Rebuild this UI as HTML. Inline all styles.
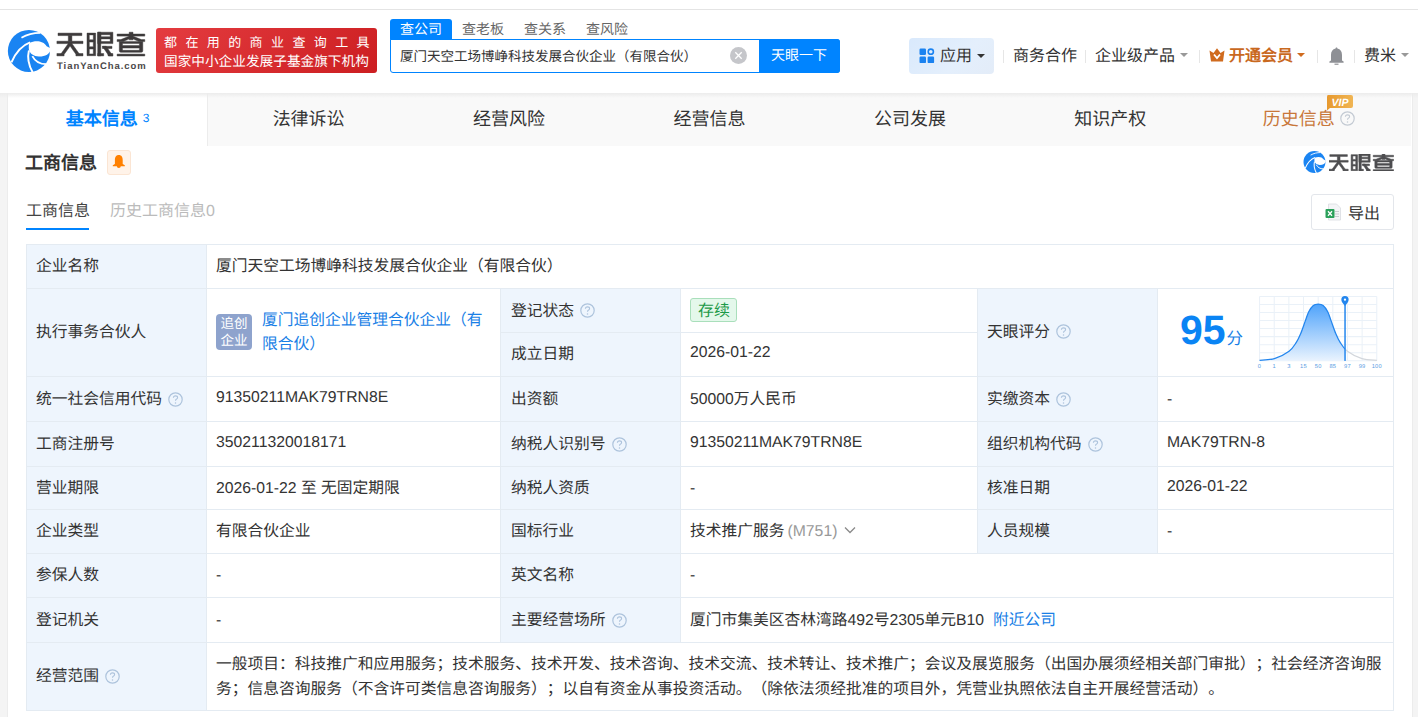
<!DOCTYPE html>
<html lang="zh-CN">
<head>
<meta charset="utf-8">
<style>
*{box-sizing:border-box;margin:0;padding:0}
html,body{width:1418px;height:717px;overflow:hidden}
body{background:#f4f4f4;font-family:"Liberation Sans",sans-serif;color:#333;position:relative;text-rendering:geometricPrecision}
.abs{position:absolute;white-space:nowrap}
#top{position:absolute;left:0;top:0;width:1418px;height:93px;background:#fff;border-top:0}
#topline{position:absolute;left:0;top:9px;width:1418px;height:1px;background:#e4e4e4}
#shadow{position:absolute;left:0;top:93px;width:1418px;height:5px;background:linear-gradient(#ececec,rgba(255,255,255,0));z-index:5}
#card{position:absolute;left:7px;top:93px;width:1406px;height:624px;background:#fff;border-left:1px solid #ececec;border-right:1px solid #ececec}
#tabs{position:absolute;left:8px;top:93px;width:1403px;height:53px;background:#f9f9f9}
.tab{position:absolute;top:0;height:53px;width:200.43px;text-align:center;font-size:18px;line-height:53px;color:#333}
.tab.act{background:#fff;border-right:1px solid #ececec;color:#0084ff;font-weight:bold}
</style>
</head>
<body>
<div id="top"></div>
<div id="topline"></div>

<svg class="abs" style="left:5px;top:26px" width="50" height="50" viewBox="0 0 717 717"><circle cx="343" cy="358" r="302" fill="#1a84f2"/>
<path d="M350 242 C425 205 545 200 597 290 L660 322 C645 405 575 440 485 438 C412 435 360 400 344 345 C338 300 340 265 350 242 Z" fill="#fff"/>
<path d="M92 522 C150 390 240 280 360 236" stroke="#fff" stroke-width="28" fill="none"/>
<path d="M236 168 C320 118 420 98 505 98" stroke="#fff" stroke-width="24" fill="none"/>
<path d="M343 350 C318 450 338 560 398 668" stroke="#fff" stroke-width="28" fill="none"/>
<path d="M392 432 C430 505 495 548 592 548" stroke="#fff" stroke-width="26" fill="none"/></svg>
<svg class="abs" style="left:54px;top:28px" width="95" height="32" viewBox="54 28 95 32"><g fill="#3d3a3b" stroke="#3d3a3b" stroke-width="0.45" stroke-linejoin="round"><rect x="58.0" y="33.1" width="23.9" height="2.5"/><rect x="56.9" y="41.2" width="26.1" height="2.4"/><rect x="68.3" y="35.5" width="3.6" height="5.8"/><polygon points="68.3,43.5 71.9,43.5 64.6,53.8 61.0,53.8"/><rect x="56.9" y="53.5" width="7.2" height="2.4"/><polygon points="68.3,43.5 71.9,43.5 79.2,53.8 75.6,53.8"/><rect x="75.9" y="53.5" width="7.1" height="2.4"/><path fill-rule="evenodd" d="M87 33.1 H95.7 V55.7 H87 Z M89.3 34.9 H93.3 V39.8 H89.3 Z M89.3 42.1 H93.3 V46.75 H89.3 Z M89.3 49 H93.3 V53.9 H89.3 Z"/><rect x="97.7" y="32.2" width="3.1" height="23.7"/><rect x="97.7" y="53.5" width="6.0" height="2.4"/><path fill-rule="evenodd" d="M97.7 32.2 H112.9 V43.6 H97.7 Z M100.8 34.7 H110.2 V36.7 H100.8 Z M100.8 38.9 H110.2 V41.5 H100.8 Z"/><rect x="102.4" y="46.3" width="9.6" height="2.2"/><polygon points="102.4,46.3 106.2,46.3 112.9,55.9 108.9,55.9"/><rect x="108.0" y="53.5" width="4.9" height="2.4"/><rect x="117.1" y="34" width="27.7" height="2.1"/><rect x="129.2" y="32.2" width="3.8" height="7.6"/><polygon points="129.6,36 131.8,37.8 123.2,41.6 117.1,41.6 117.1,39.6 120.8,39.6"/><polygon points="132.6,36 130.4,37.8 139.0,41.6 144.8,41.6 144.8,39.6 141.4,39.6"/><path fill-rule="evenodd" d="M119.3 41.4 H142.8 V50.8 Q142.8 52.3 141.3 52.3 H120.8 Q119.3 52.3 119.3 50.8 Z M122.5 43.4 H139.4 V45.6 H122.5 Z M122.5 48.1 H139.4 V50.3 H122.5 Z"/><rect x="117.1" y="54.1" width="27.7" height="1.9"/></g></svg>
<div class="abs" style="left:57px;top:60px;font-size:9.5px;line-height:14px;font-weight:bold;color:#4a4748;letter-spacing:0.95px">TianYanCha.com</div>
<!-- red banner -->
<div class="abs" style="left:156px;top:28px;width:221px;height:45px;border-radius:3px;background:linear-gradient(135deg,#e43c40,#cc1e21)"></div>
<div class="abs" style="left:164px;top:34px;font-size:13px;line-height:18px;color:#fff;letter-spacing:8.4px">都在用的商业查询工具</div>
<div class="abs" style="left:164px;top:52.5px;font-size:13.67px;line-height:18px;color:#fff">国家中小企业发展子基金旗下机构</div>
<!-- search -->
<div class="abs" style="left:390px;top:19px;width:62px;height:21px;background:#0084ff;border-radius:3px 3px 0 0"></div>
<div class="abs" style="left:400px;top:18px;font-size:14px;line-height:22px;color:#fff">查公司</div>
<div class="abs" style="left:462px;top:18px;font-size:14px;line-height:22px;color:#666">查老板</div>
<div class="abs" style="left:524px;top:18px;font-size:14px;line-height:22px;color:#666">查关系</div>
<div class="abs" style="left:586px;top:18px;font-size:14px;line-height:22px;color:#666">查风险</div>
<div class="abs" style="left:390px;top:39px;width:450px;height:34px;border:1px solid #0084ff;border-radius:0 3px 3px 3px;background:#fff"></div>
<div class="abs" style="left:400px;top:45.5px;font-size:13.5px;line-height:22px;color:#333">厦门天空工场博峥科技发展合伙企业（有限合伙）</div>
<div class="abs" style="left:729.5px;top:46.5px;width:17px;height:17px;border-radius:50%;background:#c5c6ca"></div>
<svg class="abs" style="left:729.5px;top:46.5px" width="17" height="17" viewBox="0 0 17 17"><path d="M5.3 5.3L11.7 11.7M11.7 5.3L5.3 11.7" stroke="#fff" stroke-width="1.3"/></svg>
<div class="abs" style="left:759px;top:39px;width:81px;height:34px;background:#0084ff;border-radius:0 3px 3px 0"></div>
<div class="abs" style="left:771px;top:44px;font-size:14px;line-height:22px;color:#fff">天眼一下</div>
<!-- right nav -->
<div class="abs" style="left:909px;top:38px;width:85px;height:35.5px;border-radius:4px;background:linear-gradient(135deg,#d9e9fc,#e4effc 60%,#e3ecf8)"></div>
<svg class="abs" style="left:919px;top:48px" width="16" height="16" viewBox="0 0 16 16">
  <rect x="0.5" y="0.5" width="6.5" height="6.5" rx="1.2" fill="#1a82f0"/>
  <circle cx="11.8" cy="3.7" r="2.6" fill="none" stroke="#1a82f0" stroke-width="1.6"/>
  <rect x="0.5" y="8.6" width="6.5" height="6.5" rx="1.2" fill="#1a82f0"/>
  <rect x="8.6" y="8.6" width="6.5" height="6.5" rx="1.2" fill="#1a82f0"/>
</svg>
<div class="abs" style="left:940px;top:45px;font-size:16px;line-height:24px;color:#333">应用</div>
<div class="abs" style="left:977px;top:54px;width:0;height:0;border-left:4px solid transparent;border-right:4px solid transparent;border-top:4px solid #333"></div>
<div class="abs" style="left:1003px;top:50px;width:1px;height:13px;background:#e6e6e6"></div>
<div class="abs" style="left:1013px;top:45px;font-size:16px;line-height:24px;color:#333">商务合作</div>
<div class="abs" style="left:1085px;top:50px;width:1px;height:13px;background:#e6e6e6"></div>
<div class="abs" style="left:1095px;top:45px;font-size:16px;line-height:24px;color:#333">企业级产品</div>
<div class="abs" style="left:1180px;top:53px;width:0;height:0;border-left:4px solid transparent;border-right:4px solid transparent;border-top:4px solid #999"></div>
<div class="abs" style="left:1199px;top:50px;width:1px;height:13px;background:#e6e6e6"></div>
<svg class="abs" style="left:1209px;top:48px" width="16" height="14" viewBox="0 0 16 14">
  <path d="M0.5 2.5 L4.5 5 L8 0.3 L11.5 5 L15.5 2.5 L14 13.5 L2 13.5 Z" fill="#d06b1e"/>
  <path d="M5 6.5 L8 10 L11 6.5" stroke="#fff" stroke-width="1.8" fill="none"/>
</svg>
<div class="abs" style="left:1229px;top:45px;font-size:16px;line-height:24px;color:#c9691f;font-weight:bold">开通会员</div>
<div class="abs" style="left:1297px;top:53px;width:0;height:0;border-left:4px solid transparent;border-right:4px solid transparent;border-top:4.5px solid #d06b1e"></div>
<div class="abs" style="left:1317px;top:50px;width:1px;height:13px;background:#e6e6e6"></div>
<svg class="abs" style="left:1328px;top:47px" width="17" height="18" viewBox="0 0 17 18">
  <path d="M8.5 0.5 C9.2 0.5 9.4 1 9.4 1.6 C12.5 2.3 14 4.6 14 8 L14 13.5 L15.6 14.6 L15.6 15.8 L1.4 15.8 L1.4 14.6 L3 13.5 L3 8 C3 4.6 4.5 2.3 7.6 1.6 C7.6 1 7.8 0.5 8.5 0.5 Z" fill="#8e9095"/>
  <rect x="6.5" y="16.6" width="4" height="1.2" fill="#8e9095"/>
</svg>
<div class="abs" style="left:1354px;top:50px;width:1px;height:13px;background:#e6e6e6"></div>
<div class="abs" style="left:1364px;top:45px;font-size:16px;line-height:24px;color:#333">费米</div>
<div class="abs" style="left:1401px;top:53px;width:0;height:0;border-left:4px solid transparent;border-right:4px solid transparent;border-top:4px solid #999"></div>

<div id="card"></div>
<div id="tabs">
  <div class="tab act" style="left:0">基本信息<span style="font-size:12px;font-weight:normal;vertical-align:top;position:relative;top:-1px;margin-left:5px">3</span></div>
  <div class="tab" style="left:200.43px">法律诉讼</div>
  <div class="tab" style="left:400.86px">经营风险</div>
  <div class="tab" style="left:601.29px">经营信息</div>
  <div class="tab" style="left:801.71px">公司发展</div>
  <div class="tab" style="left:1002.14px">知识产权</div>
  <div class="tab" style="left:1202.57px;color:#c8773a;padding-right:24px">历史信息</div>
</div>

<!-- section -->
<div class="abs" style="left:25px;top:150px;font-size:18px;line-height:26px;font-weight:bold;color:#333">工商信息</div>
<div class="abs" style="left:107px;top:150px;width:24px;height:24.5px;border:1px solid #fbe5d3;background:#fff3e9;border-radius:3px"></div>
<svg class="abs" style="left:112px;top:154px" width="14" height="15" viewBox="0 0 14 15"><path d="M6.8 1 C9.6 1 10.7 3.2 10.7 6 L10.7 10 L12.8 11.3 L12.8 12.2 L0.8 12.2 L0.8 11.3 L2.9 10 L2.9 6 C2.9 3.2 4 1 6.8 1 Z" fill="#ff8000"/><path d="M4.8 12 A2 2 0 0 0 8.8 12 Z" fill="#ff8000"/></svg>
<div class="abs" style="left:26px;top:199.5px;font-size:16px;line-height:24px;color:#444">工商信息</div>
<div class="abs" style="left:26px;top:228px;width:63px;height:2px;background:#0084ff"></div>
<div class="abs" style="left:110px;top:199.5px;font-size:16px;line-height:24px;color:#bbb">历史工商信息0</div>
<svg class="abs" style="left:1302.35px;top:149.3px" width="26.07" height="26.07" viewBox="0 0 717 717"><circle cx="343" cy="358" r="302" fill="#1a84f2"/>
<path d="M350 242 C425 205 545 200 597 290 L660 322 C645 405 575 440 485 438 C412 435 360 400 344 345 C338 300 340 265 350 242 Z" fill="#fff"/>
<path d="M92 522 C150 390 240 280 360 236" stroke="#fff" stroke-width="28" fill="none"/>
<path d="M236 168 C320 118 420 98 505 98" stroke="#fff" stroke-width="24" fill="none"/>
<path d="M343 350 C318 450 338 560 398 668" stroke="#fff" stroke-width="28" fill="none"/>
<path d="M392 432 C430 505 495 548 592 548" stroke="#fff" stroke-width="26" fill="none"/></svg>
<svg class="abs" style="left:1329px;top:154.4px" width="64.6" height="17" viewBox="56.9 32.2 87.9 23.8" preserveAspectRatio="none"><g fill="#4d4d50" stroke="#4d4d50" stroke-width="0.75" stroke-linejoin="round"><rect x="58.0" y="33.1" width="23.9" height="2.5"/><rect x="56.9" y="41.2" width="26.1" height="2.4"/><rect x="68.3" y="35.5" width="3.6" height="5.8"/><polygon points="68.3,43.5 71.9,43.5 64.6,53.8 61.0,53.8"/><rect x="56.9" y="53.5" width="7.2" height="2.4"/><polygon points="68.3,43.5 71.9,43.5 79.2,53.8 75.6,53.8"/><rect x="75.9" y="53.5" width="7.1" height="2.4"/><path fill-rule="evenodd" d="M87 33.1 H95.7 V55.7 H87 Z M89.3 34.9 H93.3 V39.8 H89.3 Z M89.3 42.1 H93.3 V46.75 H89.3 Z M89.3 49 H93.3 V53.9 H89.3 Z"/><rect x="97.7" y="32.2" width="3.1" height="23.7"/><rect x="97.7" y="53.5" width="6.0" height="2.4"/><path fill-rule="evenodd" d="M97.7 32.2 H112.9 V43.6 H97.7 Z M100.8 34.7 H110.2 V36.7 H100.8 Z M100.8 38.9 H110.2 V41.5 H100.8 Z"/><rect x="102.4" y="46.3" width="9.6" height="2.2"/><polygon points="102.4,46.3 106.2,46.3 112.9,55.9 108.9,55.9"/><rect x="108.0" y="53.5" width="4.9" height="2.4"/><rect x="117.1" y="34" width="27.7" height="2.1"/><rect x="129.2" y="32.2" width="3.8" height="7.6"/><polygon points="129.6,36 131.8,37.8 123.2,41.6 117.1,41.6 117.1,39.6 120.8,39.6"/><polygon points="132.6,36 130.4,37.8 139.0,41.6 144.8,41.6 144.8,39.6 141.4,39.6"/><path fill-rule="evenodd" d="M119.3 41.4 H142.8 V50.8 Q142.8 52.3 141.3 52.3 H120.8 Q119.3 52.3 119.3 50.8 Z M122.5 43.4 H139.4 V45.6 H122.5 Z M122.5 48.1 H139.4 V50.3 H122.5 Z"/><rect x="117.1" y="54.1" width="27.7" height="1.9"/></g></svg>
<!-- export -->
<div class="abs" style="left:1311px;top:194px;width:83px;height:36px;border:1px solid #e3e6eb;border-radius:3px;background:#fff"></div>
<svg class="abs" style="left:1325px;top:203px" width="17" height="18" viewBox="0 0 17 18">
  <path d="M3.5 1 L11.5 1 L15.5 5 L15.5 17 L3.5 17 Z" fill="#f4f5f7" stroke="#d9dce1" stroke-width="0.8"/>
  <rect x="10" y="8" width="4" height="1" fill="#c9ccd1"/><rect x="10" y="10.5" width="4" height="1" fill="#c9ccd1"/><rect x="10" y="13" width="4" height="1" fill="#c9ccd1"/>
  <rect x="0.5" y="6" width="9" height="9" rx="1" fill="#2aa05a"/>
  <path d="M3 8.3 L7 12.7 M7 8.3 L3 12.7" stroke="#fff" stroke-width="1.3"/>
</svg>
<div class="abs" style="left:1348px;top:202.5px;font-size:16px;line-height:24px;color:#333">导出</div>


<!-- table -->
<div class="abs" style="left:26px;top:244px;width:1368px;height:467px;background:#fff"></div>
<div class="abs" style="left:26px;top:244px;width:180px;height:466px;background:#eef5fd"></div>
<div class="abs" style="left:500px;top:288px;width:180px;height:354px;background:#eef5fd"></div>
<div class="abs" style="left:977px;top:288px;width:180px;height:265px;background:#eef5fd"></div>
<div class="abs" style="left:26px;top:244px;width:1368px;height:1px;background:#e4ebf2"></div>
<div class="abs" style="left:26px;top:288px;width:1368px;height:1px;background:#e4ebf2"></div>
<div class="abs" style="left:26px;top:376px;width:1368px;height:1px;background:#e4ebf2"></div>
<div class="abs" style="left:26px;top:421px;width:1368px;height:1px;background:#e4ebf2"></div>
<div class="abs" style="left:26px;top:466px;width:1368px;height:1px;background:#e4ebf2"></div>
<div class="abs" style="left:26px;top:509px;width:1368px;height:1px;background:#e4ebf2"></div>
<div class="abs" style="left:26px;top:553px;width:1368px;height:1px;background:#e4ebf2"></div>
<div class="abs" style="left:26px;top:597px;width:1368px;height:1px;background:#e4ebf2"></div>
<div class="abs" style="left:26px;top:642px;width:1368px;height:1px;background:#e4ebf2"></div>
<div class="abs" style="left:26px;top:710px;width:1368px;height:1px;background:#e4ebf2"></div>
<div class="abs" style="left:500px;top:332px;width:478px;height:1px;background:#e4ebf2"></div>
<div class="abs" style="left:26px;top:244px;width:1px;height:467px;background:#e4ebf2"></div>
<div class="abs" style="left:1393px;top:244px;width:1px;height:467px;background:#e4ebf2"></div>
<div class="abs" style="left:206px;top:244px;width:1px;height:467px;background:#e4ebf2"></div>
<div class="abs" style="left:500px;top:288px;width:1px;height:355px;background:#e4ebf2"></div>
<div class="abs" style="left:680px;top:288px;width:1px;height:355px;background:#e4ebf2"></div>
<div class="abs" style="left:977px;top:288px;width:1px;height:266px;background:#e4ebf2"></div>
<div class="abs" style="left:1157px;top:288px;width:1px;height:266px;background:#e4ebf2"></div>
<div class="abs" style="left:36px;top:255.0px;font-size:15.75px;line-height:24px;color:#333;">企业名称</div>
<div class="abs" style="left:216px;top:255.0px;font-size:15.75px;line-height:24px;color:#333;">厦门天空工场博峥科技发展合伙企业（有限合伙）</div>
<div class="abs" style="left:36px;top:321.0px;font-size:15.75px;line-height:24px;color:#333;">执行事务合伙人</div>
<div class="abs" style="left:216px;top:314px;width:36px;height:36px;border-radius:4px;background:#8ea3cd"></div>
<div class="abs" style="left:217px;top:315px;width:34px;font-size:13.5px;line-height:17px;color:#fff;white-space:normal;text-align:center">追创企业</div>
<div class="abs" style="left:262px;top:309px;width:230px;font-size:15.75px;line-height:24px;color:#1a7fe6;white-space:normal">厦门追创企业管理合伙企业（有限合伙）</div>
<div class="abs" style="left:511px;top:300.0px;font-size:15.75px;line-height:24px;color:#333;">登记状态</div>
<svg class="abs" style="left:580px;top:302.5px" width="15" height="15" viewBox="0 0 15 15"><circle cx="7.5" cy="7.5" r="6.7" fill="none" stroke="#adc3dc" stroke-width="1.2"/><path d="M5.4 5.7 Q5.4 3.9 7.5 3.9 Q9.6 3.9 9.6 5.6 Q9.6 6.7 8.3 7.3 Q7.5 7.7 7.5 8.8" fill="none" stroke="#adc3dc" stroke-width="1.1"/><circle cx="7.5" cy="10.9" r="0.75" fill="#adc3dc"/></svg>
<div class="abs" style="left:690px;top:298px;width:47px;height:24px;border:1px solid #a9dfbb;border-radius:3px;background:#e4f8eb"></div>
<div class="abs" style="left:698px;top:300.0px;font-size:15.75px;line-height:24px;color:#333;color:#1d9a48;font-size:16px">存续</div>
<div class="abs" style="left:511px;top:343.0px;font-size:15.75px;line-height:24px;color:#333;">成立日期</div>
<div class="abs" style="left:690px;top:341.0px;font-size:15.75px;line-height:24px;color:#333;">2026-01-22</div>
<div class="abs" style="left:987px;top:321.0px;font-size:15.75px;line-height:24px;color:#333;">天眼评分</div>
<svg class="abs" style="left:1056px;top:323.5px" width="15" height="15" viewBox="0 0 15 15"><circle cx="7.5" cy="7.5" r="6.7" fill="none" stroke="#adc3dc" stroke-width="1.2"/><path d="M5.4 5.7 Q5.4 3.9 7.5 3.9 Q9.6 3.9 9.6 5.6 Q9.6 6.7 8.3 7.3 Q7.5 7.7 7.5 8.8" fill="none" stroke="#adc3dc" stroke-width="1.1"/><circle cx="7.5" cy="10.9" r="0.75" fill="#adc3dc"/></svg>
<div class="abs" style="left:1180px;top:306px;font-size:41px;line-height:48px;font-weight:bold;color:#0a84f4">95</div>
<div class="abs" style="left:1226.5px;top:326.5px;font-size:15.75px;line-height:24px;color:#333;color:#1a7fe6;font-size:16.5px">分</div>
<div class="abs" style="left:36px;top:387.5px;font-size:15.75px;line-height:24px;color:#333;">统一社会信用代码</div>
<svg class="abs" style="left:168.0px;top:392.0px" width="15" height="15" viewBox="0 0 15 15"><circle cx="7.5" cy="7.5" r="6.7" fill="none" stroke="#adc3dc" stroke-width="1.2"/><path d="M5.4 5.7 Q5.4 3.9 7.5 3.9 Q9.6 3.9 9.6 5.6 Q9.6 6.7 8.3 7.3 Q7.5 7.7 7.5 8.8" fill="none" stroke="#adc3dc" stroke-width="1.1"/><circle cx="7.5" cy="10.9" r="0.75" fill="#adc3dc"/></svg>
<div class="abs" style="left:216px;top:385.5px;font-size:15.75px;line-height:24px;color:#333;">91350211MAK79TRN8E</div>
<div class="abs" style="left:511px;top:387.5px;font-size:15.75px;line-height:24px;color:#333;">出资额</div>
<div class="abs" style="left:690px;top:387.5px;font-size:15.75px;line-height:24px;color:#333;">50000万人民币</div>
<div class="abs" style="left:987px;top:387.5px;font-size:15.75px;line-height:24px;color:#333;">实缴资本</div>
<svg class="abs" style="left:1056.0px;top:392.0px" width="15" height="15" viewBox="0 0 15 15"><circle cx="7.5" cy="7.5" r="6.7" fill="none" stroke="#adc3dc" stroke-width="1.2"/><path d="M5.4 5.7 Q5.4 3.9 7.5 3.9 Q9.6 3.9 9.6 5.6 Q9.6 6.7 8.3 7.3 Q7.5 7.7 7.5 8.8" fill="none" stroke="#adc3dc" stroke-width="1.1"/><circle cx="7.5" cy="10.9" r="0.75" fill="#adc3dc"/></svg>
<div class="abs" style="left:1167px;top:387.5px;font-size:15.75px;line-height:24px;color:#333;">-</div>
<div class="abs" style="left:36px;top:432.5px;font-size:15.75px;line-height:24px;color:#333;">工商注册号</div>
<div class="abs" style="left:216px;top:430.5px;font-size:15.75px;line-height:24px;color:#333;">350211320018171</div>
<div class="abs" style="left:511px;top:432.5px;font-size:15.75px;line-height:24px;color:#333;">纳税人识别号</div>
<svg class="abs" style="left:611.5px;top:437.0px" width="15" height="15" viewBox="0 0 15 15"><circle cx="7.5" cy="7.5" r="6.7" fill="none" stroke="#adc3dc" stroke-width="1.2"/><path d="M5.4 5.7 Q5.4 3.9 7.5 3.9 Q9.6 3.9 9.6 5.6 Q9.6 6.7 8.3 7.3 Q7.5 7.7 7.5 8.8" fill="none" stroke="#adc3dc" stroke-width="1.1"/><circle cx="7.5" cy="10.9" r="0.75" fill="#adc3dc"/></svg>
<div class="abs" style="left:690px;top:430.5px;font-size:15.75px;line-height:24px;color:#333;">91350211MAK79TRN8E</div>
<div class="abs" style="left:987px;top:432.5px;font-size:15.75px;line-height:24px;color:#333;">组织机构代码</div>
<svg class="abs" style="left:1087.5px;top:437.0px" width="15" height="15" viewBox="0 0 15 15"><circle cx="7.5" cy="7.5" r="6.7" fill="none" stroke="#adc3dc" stroke-width="1.2"/><path d="M5.4 5.7 Q5.4 3.9 7.5 3.9 Q9.6 3.9 9.6 5.6 Q9.6 6.7 8.3 7.3 Q7.5 7.7 7.5 8.8" fill="none" stroke="#adc3dc" stroke-width="1.1"/><circle cx="7.5" cy="10.9" r="0.75" fill="#adc3dc"/></svg>
<div class="abs" style="left:1167px;top:430.5px;font-size:15.75px;line-height:24px;color:#333;">MAK79TRN-8</div>
<div class="abs" style="left:36px;top:476.5px;font-size:15.75px;line-height:24px;color:#333;">营业期限</div>
<div class="abs" style="left:216px;top:476.5px;font-size:15.75px;line-height:24px;color:#333;">2026-01-22 至 无固定期限</div>
<div class="abs" style="left:511px;top:476.5px;font-size:15.75px;line-height:24px;color:#333;">纳税人资质</div>
<div class="abs" style="left:690px;top:476.5px;font-size:15.75px;line-height:24px;color:#333;">-</div>
<div class="abs" style="left:987px;top:476.5px;font-size:15.75px;line-height:24px;color:#333;">核准日期</div>
<div class="abs" style="left:1167px;top:474.5px;font-size:15.75px;line-height:24px;color:#333;">2026-01-22</div>
<div class="abs" style="left:36px;top:520.0px;font-size:15.75px;line-height:24px;color:#333;">企业类型</div>
<div class="abs" style="left:216px;top:520.0px;font-size:15.75px;line-height:24px;color:#333;">有限合伙企业</div>
<div class="abs" style="left:511px;top:520.0px;font-size:15.75px;line-height:24px;color:#333;">国标行业</div>
<div class="abs" style="left:690px;top:520.0px;font-size:15.75px;line-height:24px;color:#333;">技术推广服务<span style="color:#999;margin-left:3px">(M751)</span></div>
<div class="abs" style="left:987px;top:520.0px;font-size:15.75px;line-height:24px;color:#333;">人员规模</div>
<div class="abs" style="left:1167px;top:520.0px;font-size:15.75px;line-height:24px;color:#333;">-</div>
<div class="abs" style="left:36px;top:564.0px;font-size:15.75px;line-height:24px;color:#333;">参保人数</div>
<div class="abs" style="left:216px;top:564.0px;font-size:15.75px;line-height:24px;color:#333;">-</div>
<div class="abs" style="left:511px;top:564.0px;font-size:15.75px;line-height:24px;color:#333;">英文名称</div>
<div class="abs" style="left:690px;top:564.0px;font-size:15.75px;line-height:24px;color:#333;">-</div>
<div class="abs" style="left:36px;top:608.5px;font-size:15.75px;line-height:24px;color:#333;">登记机关</div>
<div class="abs" style="left:216px;top:608.5px;font-size:15.75px;line-height:24px;color:#333;">-</div>
<div class="abs" style="left:511px;top:608.5px;font-size:15.75px;line-height:24px;color:#333;">主要经营场所</div>
<svg class="abs" style="left:611.5px;top:613.0px" width="15" height="15" viewBox="0 0 15 15"><circle cx="7.5" cy="7.5" r="6.7" fill="none" stroke="#adc3dc" stroke-width="1.2"/><path d="M5.4 5.7 Q5.4 3.9 7.5 3.9 Q9.6 3.9 9.6 5.6 Q9.6 6.7 8.3 7.3 Q7.5 7.7 7.5 8.8" fill="none" stroke="#adc3dc" stroke-width="1.1"/><circle cx="7.5" cy="10.9" r="0.75" fill="#adc3dc"/></svg>
<div class="abs" style="left:690px;top:608.5px;font-size:15.75px;line-height:24px;color:#333;">厦门市集美区杏林湾路492号2305单元B10<span style="color:#1a7fe6;margin-left:9px">附近公司</span></div>
<div class="abs" style="left:36px;top:665.0px;font-size:15.75px;line-height:24px;color:#333;">经营范围</div>
<svg class="abs" style="left:105px;top:668.5px" width="15" height="15" viewBox="0 0 15 15"><circle cx="7.5" cy="7.5" r="6.7" fill="none" stroke="#adc3dc" stroke-width="1.2"/><path d="M5.4 5.7 Q5.4 3.9 7.5 3.9 Q9.6 3.9 9.6 5.6 Q9.6 6.7 8.3 7.3 Q7.5 7.7 7.5 8.8" fill="none" stroke="#adc3dc" stroke-width="1.1"/><circle cx="7.5" cy="10.9" r="0.75" fill="#adc3dc"/></svg>
<div class="abs" style="left:216px;top:651.5px;width:1172px;font-size:15.75px;line-height:25.5px;color:#333;white-space:normal;text-spacing-trim:space-all">一般项目：科技推广和应用服务；技术服务、技术开发、技术咨询、技术交流、技术转让、技术推广；会议及展览服务（出国办展须经相关部门审批）；社会经济咨询服务；信息咨询服务（不含许可类信息咨询服务）；以自有资金从事投资活动。（除依法须经批准的项目外，凭营业执照依法自主开展经营活动）。</div>
<svg class="abs" style="left:1255px;top:290px" width="130" height="82" viewBox="0 0 1137 717">
<defs><linearGradient id="cg" x1="0" y1="0" x2="0" y2="1"><stop offset="0" stop-color="#4fa3fb"/><stop offset="1" stop-color="#e9f3fe"/></linearGradient>
<clipPath id="cl"><rect x="0" y="0" width="790" height="717"/></clipPath><clipPath id="cr"><rect x="790" y="0" width="400" height="717"/></clipPath></defs>
<line x1="40.0" y1="57" x2="40.0" y2="618" stroke="#eaf1f8" stroke-width="9"/><line x1="168.1" y1="57" x2="168.1" y2="618" stroke="#eaf1f8" stroke-width="9"/><line x1="296.2" y1="57" x2="296.2" y2="618" stroke="#eaf1f8" stroke-width="9"/><line x1="424.4" y1="57" x2="424.4" y2="618" stroke="#eaf1f8" stroke-width="9"/><line x1="552.5" y1="57" x2="552.5" y2="618" stroke="#eaf1f8" stroke-width="9"/><line x1="680.6" y1="57" x2="680.6" y2="618" stroke="#eaf1f8" stroke-width="9"/><line x1="808.8" y1="57" x2="808.8" y2="618" stroke="#eaf1f8" stroke-width="9"/><line x1="936.9" y1="57" x2="936.9" y2="618" stroke="#eaf1f8" stroke-width="9"/><line x1="1065.0" y1="57" x2="1065.0" y2="618" stroke="#eaf1f8" stroke-width="9"/><line x1="40" y1="57.0" x2="1065" y2="57.0" stroke="#eaf1f8" stroke-width="9"/><line x1="40" y1="127.1" x2="1065" y2="127.1" stroke="#eaf1f8" stroke-width="9"/><line x1="40" y1="197.2" x2="1065" y2="197.2" stroke="#eaf1f8" stroke-width="9"/><line x1="40" y1="267.4" x2="1065" y2="267.4" stroke="#eaf1f8" stroke-width="9"/><line x1="40" y1="337.5" x2="1065" y2="337.5" stroke="#eaf1f8" stroke-width="9"/><line x1="40" y1="407.6" x2="1065" y2="407.6" stroke="#eaf1f8" stroke-width="9"/><line x1="40" y1="477.8" x2="1065" y2="477.8" stroke="#eaf1f8" stroke-width="9"/><line x1="40" y1="547.9" x2="1065" y2="547.9" stroke="#eaf1f8" stroke-width="9"/><line x1="40" y1="618.0" x2="1065" y2="618.0" stroke="#eaf1f8" stroke-width="9"/>
<path d="M40 615 C61.7 612.5 127.0 613.3 170 600 C213.0 586.7 266.3 558.3 298 535 C329.7 511.7 343.0 485.8 360 460 C377.0 434.2 386.7 411.7 400 380 C413.3 348.3 428.3 301.7 440 270 C451.7 238.3 458.3 212.5 470 190 C481.7 167.5 496.2 146.2 510 135 C523.8 123.8 538.7 123.0 553 123 C567.3 123.0 582.2 123.8 596 135 C609.8 146.2 624.3 167.5 636 190 C647.7 212.5 654.3 238.3 666 270 C677.7 301.7 692.7 348.3 706 380 C719.3 411.7 729.0 434.2 746 460 C763.0 485.8 776.3 511.7 808 535 C839.7 558.3 893.0 586.7 936 600 C979.0 613.3 1044.3 612.5 1066 615 L1065 618 L40 618 Z" fill="url(#cg)" clip-path="url(#cl)"/>
<path d="M40 615 C61.7 612.5 127.0 613.3 170 600 C213.0 586.7 266.3 558.3 298 535 C329.7 511.7 343.0 485.8 360 460 C377.0 434.2 386.7 411.7 400 380 C413.3 348.3 428.3 301.7 440 270 C451.7 238.3 458.3 212.5 470 190 C481.7 167.5 496.2 146.2 510 135 C523.8 123.8 538.7 123.0 553 123 C567.3 123.0 582.2 123.8 596 135 C609.8 146.2 624.3 167.5 636 190 C647.7 212.5 654.3 238.3 666 270 C677.7 301.7 692.7 348.3 706 380 C719.3 411.7 729.0 434.2 746 460 C763.0 485.8 776.3 511.7 808 535 C839.7 558.3 893.0 586.7 936 600 C979.0 613.3 1044.3 612.5 1066 615" fill="none" stroke="#2386ee" stroke-width="11" clip-path="url(#cl)"/>
<path d="M40 615 C61.7 612.5 127.0 613.3 170 600 C213.0 586.7 266.3 558.3 298 535 C329.7 511.7 343.0 485.8 360 460 C377.0 434.2 386.7 411.7 400 380 C413.3 348.3 428.3 301.7 440 270 C451.7 238.3 458.3 212.5 470 190 C481.7 167.5 496.2 146.2 510 135 C523.8 123.8 538.7 123.0 553 123 C567.3 123.0 582.2 123.8 596 135 C609.8 146.2 624.3 167.5 636 190 C647.7 212.5 654.3 238.3 666 270 C677.7 301.7 692.7 348.3 706 380 C719.3 411.7 729.0 434.2 746 460 C763.0 485.8 776.3 511.7 808 535 C839.7 558.3 893.0 586.7 936 600 C979.0 613.3 1044.3 612.5 1066 615" fill="none" stroke="#d3d7dc" stroke-width="11" clip-path="url(#cr)"/>
<rect x="781" y="100" width="13" height="520" fill="#2386ee"/>
<path d="M787 140 C770 118 755 105 755 85 A32 32 0 0 1 819 85 C819 105 804 118 787 140 Z" fill="#2386ee"/>
<circle cx="787" cy="85" r="10" fill="#fff"/>
<text x="40.0" y="685" text-anchor="middle" font-size="50" fill="#5a9de3" font-family="Liberation Sans" letter-spacing="2">0</text><text x="168.1" y="685" text-anchor="middle" font-size="50" fill="#5a9de3" font-family="Liberation Sans" letter-spacing="2">1</text><text x="296.2" y="685" text-anchor="middle" font-size="50" fill="#5a9de3" font-family="Liberation Sans" letter-spacing="2">3</text><text x="424.4" y="685" text-anchor="middle" font-size="50" fill="#5a9de3" font-family="Liberation Sans" letter-spacing="2">15</text><text x="552.5" y="685" text-anchor="middle" font-size="50" fill="#5a9de3" font-family="Liberation Sans" letter-spacing="2">50</text><text x="680.6" y="685" text-anchor="middle" font-size="50" fill="#5a9de3" font-family="Liberation Sans" letter-spacing="2">85</text><text x="808.8" y="685" text-anchor="middle" font-size="50" fill="#5a9de3" font-family="Liberation Sans" letter-spacing="2">97</text><text x="936.9" y="685" text-anchor="middle" font-size="50" fill="#5a9de3" font-family="Liberation Sans" letter-spacing="2">99</text><text x="1065.0" y="685" text-anchor="middle" font-size="50" fill="#5a9de3" font-family="Liberation Sans" letter-spacing="2">100</text>
</svg>
<svg class="abs" style="left:1325px;top:94px;z-index:6" width="29" height="17" viewBox="0 0 29 17"><defs><linearGradient id="vg" x1="0" y1="0" x2="1" y2="0"><stop offset="0" stop-color="#e7992e"/><stop offset="1" stop-color="#f0b554"/></linearGradient></defs><path d="M3 1 L26 1 Q28 1 28 3 L28 12 Q28 14 26 14 L5 14 L2 16.5 L2 3 Q2 1 3 1 Z" fill="url(#vg)"/><text x="15" y="11.5" text-anchor="middle" font-size="10.5" font-weight="bold" font-style="italic" fill="#fff" font-family="Liberation Sans">VIP</text></svg>
<svg class="abs" style="left:1339.5px;top:111.3px" width="15" height="15" viewBox="0 0 15 15"><circle cx="7.5" cy="7.5" r="6.7" fill="none" stroke="#c3cad3" stroke-width="1.2"/><path d="M5.4 5.7 Q5.4 3.9 7.5 3.9 Q9.6 3.9 9.6 5.6 Q9.6 6.7 8.3 7.3 Q7.5 7.7 7.5 8.8" fill="none" stroke="#c3cad3" stroke-width="1.1"/><circle cx="7.5" cy="10.9" r="0.75" fill="#c3cad3"/></svg>
<svg class="abs" style="left:843px;top:525px" width="14" height="10" viewBox="0 0 14 10"><path d="M2 2.5 L7 7.5 L12 2.5" fill="none" stroke="#8a8a8a" stroke-width="1.3"/></svg>
<div id="shadow"></div>
</body>
</html>
